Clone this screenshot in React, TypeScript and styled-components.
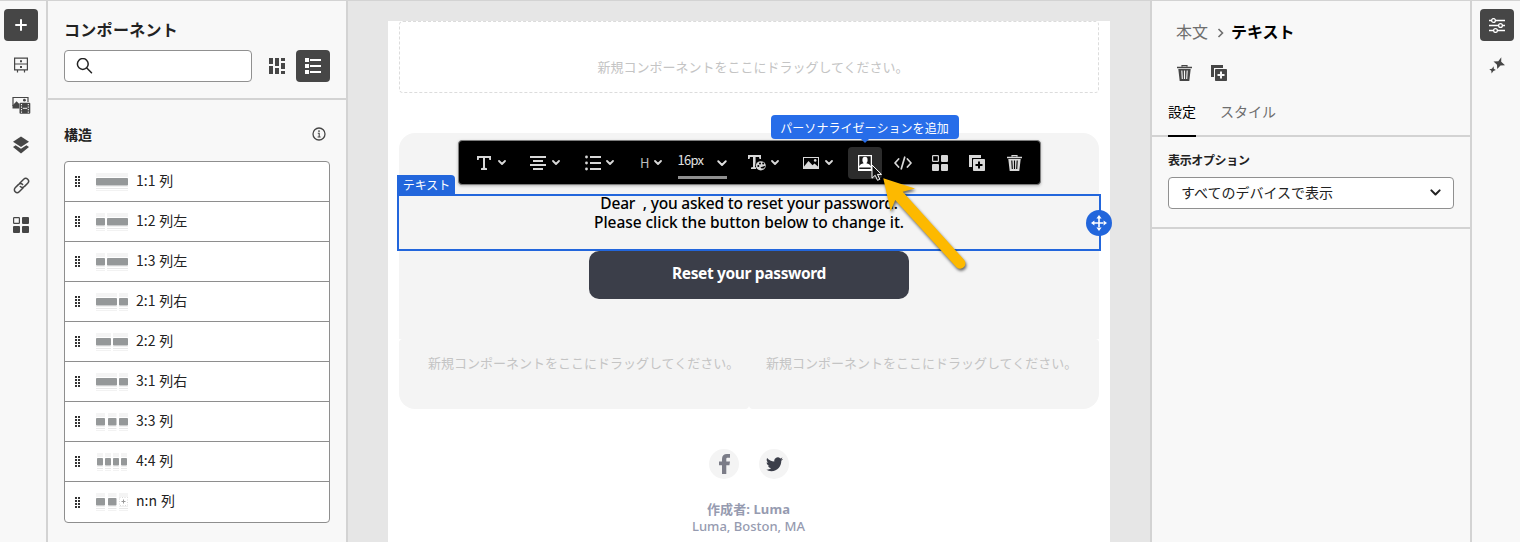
import React from "react";
import styled, { createGlobalStyle } from "styled-components";

const JP = `"Noto Sans CJK JP", "Noto Sans", sans-serif`;
const MAIL = `"Noto Sans", "Noto Sans CJK JP", sans-serif`;

const Global = createGlobalStyle`
  *, *::before, *::after { box-sizing: border-box; }
  body { margin: 0; overflow: hidden; background: #f8f8f8; font-family: ${JP}; color: #222; }
  svg { display: block; flex: none; }
`;

/* ---------- shell ---------- */
const Shell = styled.div`
  display: flex;
  width: 1520px;
  height: 542px;
  overflow: hidden;
  border-top: 1px solid #d3d3d3;
  background: #f8f8f8;
`;
const Rail = styled.nav<{ $side: "left" | "right" }>`
  flex: none;
  width: ${(p) => (p.$side === "left" ? 46 : 50)}px;
  padding: 8px 0 0 ${(p) => (p.$side === "left" ? 4 : 8)}px;
  border-left: ${(p) => (p.$side === "right" ? "2px solid #d3d3d3" : "0")};
  display: flex;
  flex-direction: column;
  gap: 8px;
`;
const IconButton = styled.button<{ $active?: boolean }>`
  flex: none;
  width: 34px;
  height: 32px;
  padding: 0;
  border: 0;
  border-radius: 4px;
  display: flex;
  align-items: center;
  justify-content: center;
  background: ${(p) => (p.$active ? "#464646" : "transparent")};
  color: ${(p) => (p.$active ? "#fff" : "#464646")};
`;

/* ---------- component panel ---------- */
const Panel = styled.aside`
  flex: none;
  width: 302px;
  border: solid #d3d3d3;
  border-width: 0 2px;
`;
const PanelHead = styled.header`
  height: 99px;
  padding: 16px 16px 0;
  border-bottom: 2px solid #d3d3d3;
`;
const PanelTitle = styled.h2`
  margin: 0;
  height: 33px;
  font-size: 16px;
  line-height: 24px;
  font-weight: 700;
  letter-spacing: 0.3px;
`;
const SearchRow = styled.div`
  display: flex;
  align-items: center;
`;
const SearchBox = styled.div`
  width: 188px;
  height: 32px;
  padding-left: 11px;
  margin-right: 8px;
  border: 1px solid #909090;
  border-radius: 4px;
  background: #fff;
  display: flex;
  align-items: center;
`;
const SectionHead = styled.div`
  height: 61px;
  padding: 7px 20px 0 16px;
  display: flex;
  align-items: center;
  justify-content: space-between;
  font-size: 14px;
  font-weight: 700;
`;
const StructureList = styled.ul`
  list-style: none;
  margin: 0 16px;
  padding: 0;
  border: 1px solid #8e8e8e;
  border-radius: 4px;
  background: #fff;
`;
const StructureRow = styled.li`
  height: 40px;
  padding-left: 10px;
  display: flex;
  align-items: center;
  font-size: 14px;
  line-height: 20px;
  word-spacing: 0.8px;
  & + & { border-top: 1px solid #8e8e8e; }
  &:first-child { height: 39px; }
  &:last-child { height: 41px; }
`;
const Thumb = styled.svg`margin: 0 8px 0 16px;`;
const RowName = styled.span`padding-bottom: 4px;`;

/* ---------- canvas ---------- */
const Canvas = styled.main`
  position: relative;
  flex: none;
  width: 802px;
  padding: 20px 40px 0;
  background: #e6e6e6;
`;
const Mail = styled.div`
  width: 722px;
  height: 521px;
  padding: 0 11px;
  background: #fff;
`;
const Placeholder = styled.div`
  font-size: 13px;
  line-height: 20px;
  color: #c4c4c4;
  white-space: nowrap;
`;
const DropZone = styled.div`
  height: 72px;
  padding: 20px 0 0 8px;
  display: flex;
  align-items: center;
  justify-content: center;
  border: 1px dashed #dcdcdc;
  border-radius: 4px;
`;
const Card = styled.section`
  margin-top: 40px;
  height: 206px;
  border-radius: 16px 16px 0 0;
  background: #f4f4f4;
`;
const Spacer = styled.div`height: 61px;`;
const Selected = styled.div`
  position: relative;
  height: 57px;
  margin: 0 -2px;
  border: 2px solid #2266dc;
  text-align: center;
  font-family: ${MAIL};
  font-size: 15.5px;
  font-weight: 500;
  line-height: 19px;
  color: #000;
`;
const Copy = styled.div`margin-top: -2px;`;
const Line = styled.p<{ $track: number }>`
  margin: 0;
  white-space: pre;
  letter-spacing: ${(p) => p.$track}px;
`;
const Tag = styled.span`
  position: absolute;
  left: -2px;
  top: -21px;
  height: 20px;
  width: 58px;
  padding-left: 1px;
  text-align: center;
  font-family: ${JP};
  font-size: 12px;
  line-height: 20px;
  font-weight: 400;
  color: #fff;
  background: #2266dc;
  border-radius: 0 4px 0 0;
`;
const MoveHandle = styled.span`
  position: absolute;
  right: -13px;
  top: 14px;
  width: 26px;
  height: 26px;
  border-radius: 50%;
  background: #2266dc;
  display: flex;
  align-items: center;
  justify-content: center;
`;
const ResetButton = styled.div`
  width: 320px;
  height: 48px;
  margin: 0 auto;
  border-radius: 10px;
  background: #3b3e49;
  color: #fff;
  font-family: ${MAIL};
  font-size: 15.5px;
  font-weight: 700;
  line-height: 44px;
  letter-spacing: -0.35px;
  text-align: center;
`;
const Columns = styled.div`
  display: flex;
  height: 70px;
`;
const Column = styled.div<{ $side: "left" | "right" }>`
  flex: none;
  width: 350px;
  padding: 14px 0 0 ${(p) => (p.$side === "left" ? 29 : 17)}px;
  background: #f4f4f4;
  border-radius: ${(p) => (p.$side === "left" ? "4px 0 4px 16px" : "0 4px 16px 4px")};
`;
const Social = styled.div`
  display: flex;
  justify-content: center;
  gap: 20px;
  padding-top: 40px;
`;
const SocialBadge = styled.span`
  width: 30px;
  height: 30px;
  border-radius: 50%;
  background: #f4f4f4;
  display: flex;
  align-items: center;
  justify-content: center;
`;
const Address = styled.div`
  padding: 22px 1px 0 0;
  text-align: center;
  font-family: ${MAIL};
  font-size: 13px;
  line-height: 17px;
  font-weight: 500;
  color: #969bb0;
`;
const Author = styled.div`
  font-weight: 700;
  letter-spacing: 0.1px;
`;

/* ---------- floating toolbar ---------- */
const Toolbar = styled.div`
  position: absolute;
  left: 110px;
  top: 139px;
  width: 583px;
  height: 45px;
  padding: 1px 0 0 18px;
  display: flex;
  align-items: center;
  background: #000;
  border: 1px solid #7d7d7d;
  border-radius: 4px;
  box-shadow: 0 1px 3px rgba(0, 0, 0, 0.25);
  color: #d8d8d8;
`;
const Tool = styled.span<{ $before?: number; $gap?: number }>`
  display: flex;
  align-items: center;
  gap: ${(p) => p.$gap ?? 6}px;
  margin-left: ${(p) => p.$before ?? 0}px;
`;
const ToolActive = styled(Tool)`
  width: 34px;
  height: 32px;
  justify-content: center;
  border-radius: 4px;
  background: #2c2c2c;
  color: #fff;
`;
const Heading = styled.span`
  font-size: 13px;
  line-height: 20px;
  color: #bdbdbd;
`;
const SizeField = styled.span`
  display: flex;
  align-items: center;
  justify-content: space-between;
  width: 49px;
  height: 32px;
  margin-left: 16px;
  border-bottom: 3px solid #909090;
  font-size: 13px;
  line-height: 20px;
  letter-spacing: -0.7px;
  color: #e0e0e0;
  svg { margin-top: 3px; }
`;
const SizeValue = styled.span`
  margin-left: -1px;
  padding-bottom: 4px;
`;
const Tooltip = styled.div`
  position: absolute;
  left: 423px;
  top: 114px;
  width: 188px;
  height: 24px;
  padding-right: 1px;
  border-radius: 4px;
  background: #276de9;
  color: #fff;
  font-size: 12px;
  line-height: 25px;
  letter-spacing: 0.05px;
  text-align: center;
  white-space: nowrap;
  &::after {
    content: "";
    position: absolute;
    left: 90px;
    top: 24px;
    border: 4px solid transparent;
    border-top-color: #276de9;
    border-bottom: 0;
  }
`;
const Pointer = styled.svg`
  position: absolute;
  left: 518px;
  top: 155px;
`;

/* ---------- settings panel ---------- */
const Settings = styled.aside`
  flex: none;
  width: 320px;
  border-left: 2px solid #d3d3d3;
`;
const Crumbs = styled.div`
  display: flex;
  align-items: center;
  height: 24px;
  margin: 18px 0 0 24px;
  font-size: 16px;
  line-height: 24px;
  color: #6e6e6e;
  svg { margin: 4px 7px 0 9px; }
  strong { color: #000; }
`;
const Actions = styled.div`
  display: flex;
  gap: 19px;
  margin: 22px 0 0 25px;
  color: #464646;
`;
const Tabs = styled.div`
  display: flex;
  gap: 24px;
  height: 56px;
  padding-left: 16px;
  border-bottom: 2px solid #d3d3d3;
  font-size: 14px;
`;
const Tab = styled.span<{ $on?: boolean }>`
  height: 56px;
  padding-top: 20px;
  line-height: 20px;
  color: ${(p) => (p.$on ? "#000" : "#6e6e6e")};
  border-bottom: 2px solid ${(p) => (p.$on ? "#000" : "transparent")};
`;
const Field = styled.div`
  height: 92px;
  padding: 14px 16px 0;
  border-bottom: 2px solid #d3d3d3;
`;
const FieldLabel = styled.div`
  height: 26px;
  font-size: 12px;
  line-height: 18px;
  font-weight: 700;
  letter-spacing: -0.35px;
`;
const Select = styled.div`
  height: 32px;
  padding: 0 12px;
  display: flex;
  align-items: center;
  justify-content: space-between;
  border: 1px solid #909090;
  border-radius: 4px;
  background: #fff;
  font-size: 14px;
  line-height: 28px;
`;
const SelectValue = styled.span`padding-bottom: 2px;`;

/* ---------- icons ---------- */
const Chevron = ({ w = 8, s = 1.8 }: { w?: number; s?: number }) => (
  <svg width={w} height={w * 0.65} viewBox="0 0 8 5.2" fill="none" stroke="currentColor" strokeWidth={s} strokeLinecap="round" strokeLinejoin="round">
    <path d="M1 1l3 3 3-3" />
  </svg>
);
const Plus = () => (
  <svg width="14" height="14" viewBox="0 0 14 14" stroke="currentColor" strokeWidth="2" strokeLinecap="round"><path d="M7 2v10M2 7h10" /></svg>
);
const Drawer = () => (
  <svg width="16" height="16" viewBox="0 0 16 16" fill="none" stroke="currentColor" strokeWidth="1.2">
    <path d="M1.6 1.1h12.8v11.8H1.6zM1.6 7h12.8M4.5 13v2.5M11.5 13v2.5" />
    <path d="M7 4.2h2M7 10h2" strokeWidth="2" />
  </svg>
);
const Media = () => (
  <svg width="20" height="18" viewBox="0 0 20 18">
    <path d="M2 10V1.5h15V6" fill="none" stroke="currentColor" strokeWidth="1.2" />
    <path d="M1.5 12.5V9.5L5.6 5.2 8.3 8v4.5z" fill="currentColor" />
    <circle cx="13.4" cy="4.2" r="1.4" fill="currentColor" />
    <rect x="8.5" y="6.8" width="10.8" height="11" rx="1" fill="currentColor" />
    <path d="M10.5 8v9M17.3 8v9" stroke="#f8f8f8" strokeWidth="1.1" strokeDasharray="1.3 1.2" />
    <path d="M11.8 12.3h4.4" stroke="#f8f8f8" strokeWidth="1" />
  </svg>
);
const Layers = () => (
  <svg width="16" height="18" viewBox="0 0 16 18" fill="currentColor">
    <path d="M8 0.5l8 5.2-8 5.2-8-5.2z" />
    <path d="M2.6 9.2L8 12.7l5.4-3.5L16 11l-8 6.5L0 11z" />
  </svg>
);
const LinkIcon = () => (
  <svg width="17" height="17" viewBox="0 0 17 17" fill="none" stroke="currentColor" strokeWidth="1.5" strokeLinecap="round">
    <path d="M6.7 6.2l4-4a2.75 2.75 0 0 1 4 4L11.3 9.6a2.75 2.75 0 0 1-4 0" />
    <path d="M10.2 10.8l-4 4a2.75 2.75 0 0 1-4-4l3.4-3.4a2.75 2.75 0 0 1 4 0" />
  </svg>
);
const Blocks = () => (
  <svg width="16" height="16" viewBox="0 0 16 16" fill="currentColor">
    <rect x="0.6" y="0.6" width="5.8" height="5.8" rx="0.6" fill="none" stroke="currentColor" strokeWidth="1.2" />
    <rect x="9" width="7" height="7" rx="1" /><rect y="9" width="7" height="7" rx="1" /><rect x="9" y="9" width="7" height="7" rx="1" />
  </svg>
);
const Search = () => (
  <svg width="17" height="17" viewBox="0 0 17 17" fill="none" stroke="#222" strokeWidth="1.5" strokeLinecap="round"><circle cx="6.8" cy="6" r="5.4" /><path d="M10.8 10l4.7 4.7" /></svg>
);
const Mosaic = () => (
  <svg width="16" height="16" viewBox="0 0 16 16" fill="currentColor">
    <path d="M0 0h4v6H0zM0 8h4v8H0zM6 0h4v8H6zM6 10h4v6H6zM12 0h4v3h-4zM12 5h4v6h-4zM12 13h4v3h-4z" />
  </svg>
);
const ListDetail = () => (
  <svg width="16" height="16" viewBox="0 0 16 16" fill="currentColor">
    <path d="M0 0h4v4H0zM0 6h4v4H0zM0 12h4v4H0zM5 1h11v2H5zM5 7h11v2H5zM5 13h11v2H5z" />
  </svg>
);
const Info = () => (
  <svg width="14" height="14" viewBox="0 0 14 14" fill="none" stroke="#464646" strokeWidth="1.3">
    <circle cx="7" cy="7" r="6" /><path d="M5.8 6.3H7.2v3.6M5.6 10h3" strokeWidth="1.1" /><circle cx="7" cy="4.1" r="0.9" fill="#464646" stroke="none" />
  </svg>
);
const Grip = () => (
  <svg width="5" height="11" viewBox="0 0 5 11" fill="#333">
    {[0, 3, 6, 9].map((y) => (
      <React.Fragment key={y}><rect y={y} width="2" height="2" /><rect x="3" y={y} width="2" height="2" /></React.Fragment>
    ))}
  </svg>
);
const TextT = () => (
  <svg width="14" height="14" viewBox="0 0 14 14" fill="currentColor">
    <path d="M0 0h14v4h-1.7L12 2H8v9.8l2 .5V14H4v-1.7l2-.5V2H2l-.3 2H0z" />
  </svg>
);
const AlignCenter = () => (
  <svg width="16" height="14" viewBox="0 0 16 14" fill="currentColor"><path d="M0 0h16v2H0zM3 4h10v2H3zM0 8h16v2H0zM3 12h10v2H3z" /></svg>
);
const Bullets = () => (
  <svg width="16" height="16" viewBox="0 0 16 16" fill="currentColor">
    <path d="M5 1h11v2H5zM5 7h11v2H5zM5 13h11v2H5z" />
    <circle cx="1.5" cy="2" r="1.4" /><circle cx="1.5" cy="8" r="1.4" /><circle cx="1.5" cy="14" r="1.4" />
  </svg>
);
const TextColor = () => (
  <svg width="18" height="16" viewBox="0 0 18 16">
    <path d="M0 0h13v4h-1.5L11 2H7.6v5L7 12l1 .5V14H3v-1.6l2-.5V2H2l-.5 2H0z" fill="currentColor" />
    <ellipse cx="12.8" cy="10.8" rx="5" ry="4.6" fill="currentColor" />
    <g fill="#000"><circle cx="10.3" cy="11" r="1" /><circle cx="12" cy="8.4" r="1" /><circle cx="15.2" cy="8.6" r="1" /><path d="M12.5 12.2l5-1.4-1.5 2.4-2.5.4z" /></g>
  </svg>
);
const ImageIcon = () => (
  <svg width="16" height="12" viewBox="0 0 16 12">
    <rect x="0.5" y="0.5" width="15" height="11" fill="none" stroke="currentColor" />
    <path d="M1 9.5L5.5 4l4 4.2 2-1.8L15 9.5V11H1z" fill="currentColor" /><circle cx="12.2" cy="3.4" r="1.3" fill="currentColor" />
  </svg>
);
const Person = () => (
  <svg width="14" height="16" viewBox="0 0 14 16">
    <path d="M0 0h14v16H0z" fill="currentColor" />
    <path d="M1.3 1.3h11.4v9.4H1.3zM1.3 12.6h11.4v1.5H1.3z" fill="#1a1a1a" />
    <ellipse cx="7" cy="4.9" rx="2.6" ry="3.2" fill="currentColor" />
    <path d="M5.6 7h2.8v1.3c2.4.5 3.7 1 3.9 2.8H1.7c.2-1.8 1.5-2.3 3.9-2.8z" fill="currentColor" />
  </svg>
);
const Code = () => (
  <svg width="18" height="14" viewBox="0 0 18 14" fill="none" stroke="currentColor" strokeWidth="1.7" strokeLinecap="round" strokeLinejoin="round">
    <path d="M4.6 3L1 7l3.6 4M13.4 3L17 7l-3.6 4M10.7 1.2L7.3 12.8" />
  </svg>
);
const Duplicate = ({ hole }: { hole: string }) => (
  <svg width="16" height="16" viewBox="0 0 16 16" fill="currentColor">
    <path d="M0 0h12v3H3v9H0z" /><rect x="4" y="4" width="12" height="12" rx="0.8" />
    <path d="M10 6.5v7M6.5 10h7" stroke={hole} strokeWidth="2" />
  </svg>
);
const Trash = ({ hole }: { hole: string }) => (
  <svg width="15" height="16" viewBox="0 0 15 16">
    <path d="M5 1.8V.7h5v1.1" fill="none" stroke="currentColor" strokeWidth="1.2" />
    <path d="M0 1.8h15v1.4H0zM1.3 4h12.4L12.3 16H2.7z" fill="currentColor" />
    <path d="M4.8 5.5l.5 8.5M7.5 5.5V14M10.2 5.5l-.5 8.5" stroke={hole} strokeWidth="1.1" />
  </svg>
);
const Move = () => (
  <svg width="16" height="16" viewBox="0 0 16 16" fill="#fff">
    <path d="M7.2 3h1.6v10H7.2zM3 7.2h10v1.6H3zM8 0l2.6 3.4H5.4zM8 16l2.6-3.4H5.4zM0 8l3.4-2.6v5.2zM16 8l-3.4-2.6v5.2z" />
  </svg>
);
const Facebook = () => (
  <svg width="11" height="20" viewBox="0 0 11 20" fill="#7b7c87">
    <path d="M3 20V11.2H0V7.4h3V5C3 1.7 5 0 7.8 0H11v3.8H9C7.6 3.8 7.3 4.3 7.3 5.2v2.2H11l-.6 3.8H7.3V20z" />
  </svg>
);
const Twitter = () => (
  <svg width="17" height="15" viewBox="0 2.6 24 19.5" fill="#3b3e49">
    <path d="M23.95 4.57a10 10 0 0 1-2.82.77 4.96 4.96 0 0 0 2.16-2.72c-.95.55-2 .95-3.13 1.18a4.92 4.92 0 0 0-8.38 4.48C7.69 8.09 4.07 6.13 1.64 3.16a4.82 4.82 0 0 0-.67 2.48c0 1.71.87 3.21 2.19 4.1a4.9 4.9 0 0 1-2.23-.62v.06a4.92 4.92 0 0 0 3.95 4.83 5 5 0 0 1-2.21.08 4.94 4.94 0 0 0 4.6 3.42A9.87 9.87 0 0 1 0 19.54a13.99 13.99 0 0 0 7.55 2.21c9.05 0 14-7.5 14-13.98 0-.21 0-.42-.02-.63a9.94 9.94 0 0 0 2.46-2.55z" />
  </svg>
);
const Sliders = () => (
  <svg width="16" height="15" viewBox="0 0 16 15" fill="none" stroke="currentColor" strokeWidth="1.3">
    <path d="M0 2.5h2.5M6.5 2.5H16M0 7.5h9.5M13.5 7.5H16M0 12.5h4.5M8.5 12.5H16" />
    <circle cx="4.5" cy="2.5" r="1.9" /><circle cx="11.5" cy="7.5" r="1.9" /><circle cx="6.5" cy="12.5" r="1.9" />
  </svg>
);
const Sparkle = () => (
  <svg width="16" height="17" viewBox="0 0 16 17" fill="currentColor">
    <path d="M12.3.3L12.2 4.7 16 8.2l-4.5.2L8.2 12 8 7.7 4.5 4.500l4.8-.3zM4.6 9.2l.2 2.600 2 1.300-2.400.9L2.600 16.600l-.3-2.800L.3 12.200l2.600-.4z" />
  </svg>
);

/* ---------- data ---------- */
type Structure = { name: string; cells: [number, number][]; add?: boolean };
const structures: Structure[] = [
  { name: "1:1 列", cells: [[0, 32]] },
  { name: "1:2 列左", cells: [[0, 9], [11, 32]] },
  { name: "1:3 列左", cells: [[0, 9], [11, 32]] },
  { name: "2:1 列右", cells: [[0, 21], [23, 32]] },
  { name: "2:2 列", cells: [[0, 15], [17, 32]] },
  { name: "3:1 列右", cells: [[0, 21], [23, 32]] },
  { name: "3:3 列", cells: [[0, 9], [12, 20.5], [23, 32]] },
  { name: "4:4 列", cells: [[1, 7], [9, 15], [17, 23], [25, 31]] },
  { name: "n:n 列", cells: [[0, 9], [12, 20.5]], add: true },
];

const StructureThumb = ({ cells, add }: Structure) => (
  <Thumb width="32" height="18" viewBox="0 0 32 18">
    {(add ? [...cells, [23, 32]] : cells).map(([a, b]) => (
      <g key={a}>
        <rect x={a} width={b - a} y="0" height="4" fill="#f4f4f4" />
        <rect x={a} width={b - a} y="13" height="1" fill="#f0f0f0" />
        <rect x={a} width={b - a} y="15" height="1" fill="#e8e8e8" />
        <rect x={a} width={b - a} y="17" height="1" fill="#f2f2f2" />
      </g>
    ))}
    {cells.map(([a, b]) => <rect key={a} x={a} width={b - a} y="5" height="7.5" rx="0.8" fill="#959899" />)}
    {add && (
      <g fill="none" stroke="#ccc">
        <rect x="23.5" y="4.5" width="8" height="8" strokeDasharray="1 1.5" strokeWidth="0.7" fill="#fff" />
        <path d="M25.5 8.5h4M27.5 6.5v4" stroke="#999" />
      </g>
    )}
  </Thumb>
);

const EMPTY = "新規コンポーネントをここにドラッグしてください。";

export default function App() {
  return (
    <>
      <Global />
      <Shell>
        <Rail $side="left">
          <IconButton $active><Plus /></IconButton>
          <IconButton><Drawer /></IconButton>
          <IconButton><Media /></IconButton>
          <IconButton><Layers /></IconButton>
          <IconButton><LinkIcon /></IconButton>
          <IconButton><Blocks /></IconButton>
        </Rail>

        <Panel>
          <PanelHead>
            <PanelTitle>コンポーネント</PanelTitle>
            <SearchRow>
              <SearchBox><Search /></SearchBox>
              <IconButton><Mosaic /></IconButton>
              <Tool $before={2}><IconButton $active><ListDetail /></IconButton></Tool>
            </SearchRow>
          </PanelHead>
          <SectionHead><span>構造</span><Info /></SectionHead>
          <StructureList>
            {structures.map((s) => (
              <StructureRow key={s.name}>
                <Grip />
                <StructureThumb {...s} />
                <RowName>{s.name}</RowName>
              </StructureRow>
            ))}
          </StructureList>
        </Panel>

        <Canvas>
          <Mail>
            <DropZone><Placeholder>{EMPTY}</Placeholder></DropZone>
            <Card>
              <Spacer />
              <Selected>
                <Copy>
                  <Line $track={-0.2}>{"Dear  , you asked to reset your password."}</Line>
                  <Line $track={-0.04}>Please click the button below to change it.</Line>
                </Copy>
                <Tag>テキスト</Tag>
                <MoveHandle><Move /></MoveHandle>
              </Selected>
              <ResetButton>Reset your password</ResetButton>
            </Card>
            <Columns>
              <Column $side="left"><Placeholder>{EMPTY}</Placeholder></Column>
              <Column $side="right"><Placeholder>{EMPTY}</Placeholder></Column>
            </Columns>
            <Social>
              <SocialBadge><Facebook /></SocialBadge>
              <SocialBadge><Twitter /></SocialBadge>
            </Social>
            <Address>
              <Author>作成者: Luma</Author>
              <div>Luma, Boston, MA</div>
            </Address>
          </Mail>

          <Toolbar>
            <Tool $gap={7}><TextT /><Chevron /></Tool>
            <Tool $before={24}><AlignCenter /><Chevron /></Tool>
            <Tool $before={25} $gap={5}><Bullets /><Chevron /></Tool>
            <Tool $before={26} $gap={5}><Heading>H</Heading><Chevron /></Tool>
            <SizeField><SizeValue>16px</SizeValue><Chevron w={10} s={1.5} /></SizeField>
            <Tool $before={21} $gap={5}><TextColor /><Chevron /></Tool>
            <Tool $before={24}><ImageIcon /><Chevron /></Tool>
            <ToolActive $before={15}><Person /></ToolActive>
            <Tool $before={12}><Code /></Tool>
            <Tool $before={20}><Blocks /></Tool>
            <Tool $before={21}><Duplicate hole="#000" /></Tool>
            <Tool $before={22}><Trash hole="#000" /></Tool>
          </Toolbar>
          <Tooltip>パーソナライゼーションを追加</Tooltip>
          <Pointer width="110" height="130" viewBox="866 156 110 130">
            <path d="M872 165v13.2l3.2-2.9 2.3 5 2.3-1-2.3-4.9h4z" fill="#111" stroke="#fff" strokeWidth="1" />
            <path
              d="M883.3 178.2L915 188.5 902.7 191.8 964 259.8A5.3 5.3 0 0 1 956.2 267L895.2 200 890.7 211.3z"
              fill="#fdb900"
              filter="drop-shadow(1px 2px 1.5px rgba(0,0,0,.6))"
            />
          </Pointer>
        </Canvas>

        <Settings>
          <Crumbs>
            <span>本文</span>
            <svg width="7" height="10" viewBox="0 0 7 10" fill="none" stroke="#6e6e6e" strokeWidth="1.6"><path d="M1.5 1l4 4-4 4" /></svg>
            <strong>テキスト</strong>
          </Crumbs>
          <Actions><Trash hole="#f8f8f8" /><Duplicate hole="#f8f8f8" /></Actions>
          <Tabs><Tab $on>設定</Tab><Tab>スタイル</Tab></Tabs>
          <Field>
            <FieldLabel>表示オプション</FieldLabel>
            <Select><SelectValue>すべてのデバイスで表示</SelectValue><Chevron w={11} s={1.5} /></Select>
          </Field>
        </Settings>

        <Rail $side="right">
          <IconButton $active><Sliders /></IconButton>
          <IconButton><Sparkle /></IconButton>
        </Rail>
      </Shell>
    </>
  );
}
